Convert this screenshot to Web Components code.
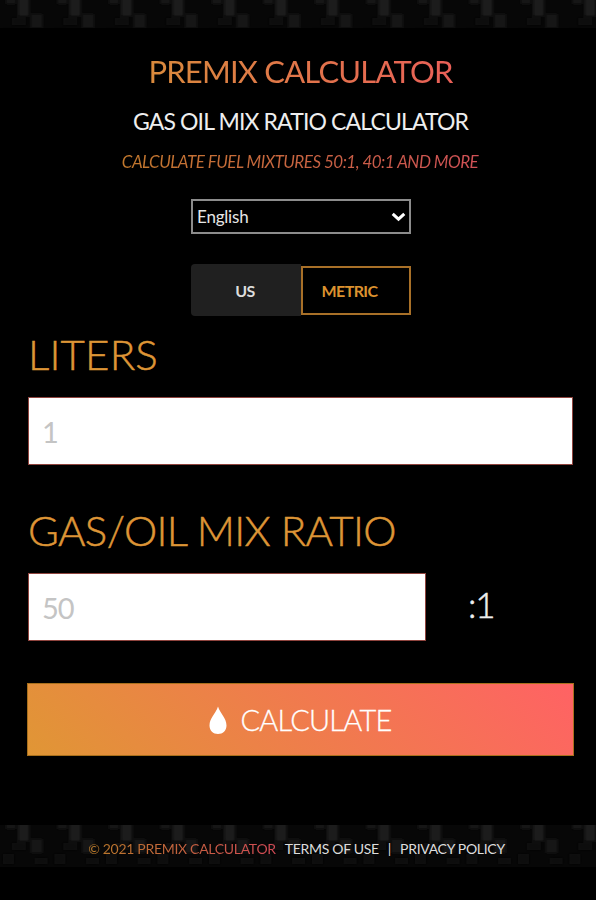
<!DOCTYPE html>
<html lang="en">
<head>
<meta charset="utf-8">
<title>Premix Calculator</title>
<style>
  * { box-sizing: border-box; }
  body {
    margin: 0;
    height: 900px;
    overflow: hidden;
    background: #000;
    color: #fff;
    font-family: Lato, "Liberation Sans", sans-serif;
    --orange: #dd9536;
    --brand: linear-gradient(45deg, #e09635, #ff6264);
  }
</style>
</head>
<body>
<premix-app></premix-app>

<script>
class CarbonStrip extends HTMLElement {
  constructor() {
    super();
    this.attachShadow({ mode: "open" });
    this.shadowRoot.innerHTML = `
      <style>
        :host { display: block; background: #060606; }
        svg { display: block; width: 100%; height: 100%; }
        .wrap { display: grid; height: 100%; }
        .wrap > * { grid-area: 1 / 1; min-height: 0; }
        .content { display: flex; justify-content: center; align-items: center; }
      </style>
      <div class="wrap">
        <svg aria-hidden="true">
          <defs>
            <filter id="soft"><feGaussianBlur stdDeviation="1.8"/></filter>
            <pattern id="weave" width="51.5" height="42" patternUnits="userSpaceOnUse">
              <rect width="51.5" height="42" fill="#070707"/>
              <g filter="url(#soft)">
                <rect x="18" y="-3" width="11" height="19" fill="#1a1a1a"/>
                <rect x="31" y="14" width="11" height="14" fill="#191919"/>
                <rect x="6" y="-3" width="10" height="7" fill="#181818"/>
                <rect x="12" y="18" width="14" height="7" fill="#090909"/>
                <rect x="3" y="29" width="11" height="10" fill="#0e0e0e"/>
                <rect x="35" y="33" width="12" height="6" fill="#101010"/>
              </g>
            </pattern>
          </defs>
          <rect width="100%" height="100%" fill="url(#weave)"/>
        </svg>
        <div class="content"><slot></slot></div>
      </div>`;
  }
}
customElements.define("carbon-strip", CarbonStrip);

class PageTitle extends HTMLElement {
  constructor() {
    super();
    this.attachShadow({ mode: "open" });
    this.shadowRoot.innerHTML = `
      <style>
        :host { display: flex; flex-direction: column; align-items: center; text-transform: uppercase; white-space: nowrap; }
        h1, h2, p { margin: 0; font-weight: 400; }
        h1, p { -webkit-background-clip: text; background-clip: text; color: transparent; }
        h1 { font-size: 31px; line-height: 40px; letter-spacing: -0.8px; background-image: linear-gradient(90deg, #d98a3c, #ea6058); }
        h2 { margin-top: 13px; font-size: 23px; line-height: 34px; letter-spacing: -0.87px; color: #eee; }
        p { margin-top: 13px; padding-right: 1px; font-size: 17px; line-height: 22px; font-style: italic; letter-spacing: -0.52px; background-image: linear-gradient(90deg, #c2782c, #cf5056); }
      </style>
      <h1><slot name="title"></slot></h1>
      <h2><slot name="subtitle"></slot></h2>
      <p><slot name="tagline"></slot></p>`;
  }
}
customElements.define("page-title", PageTitle);

class LanguageSelect extends HTMLElement {
  constructor() {
    super();
    this.attachShadow({ mode: "open" });
    this.shadowRoot.innerHTML = `
      <style>
        :host {
          display: flex; align-items: center; justify-content: space-between; box-sizing: border-box;
          width: 220px; height: 35px; padding: 0 3px 0 4px; border: 2px solid #8c8c8c;
          font-size: 17px; letter-spacing: -0.2px; color: #e6e6e6;
        }
        svg { width: 15px; height: 10px; }
      </style>
      <span><slot></slot></span>
      <svg viewBox="0 0 15 10"><path d="M1.7 1.8 L7.5 7.2 L13.3 1.8" fill="none" stroke="#fff" stroke-width="3"/></svg>`;
  }
}
customElements.define("language-select", LanguageSelect);

class UnitToggle extends HTMLElement {
  constructor() {
    super();
    this.attachShadow({ mode: "open" });
    this.shadowRoot.innerHTML = `
      <style>
        :host { display: flex; align-items: center; width: 220px; height: 52px; font-size: 16px; font-weight: 700; }
        button {
          box-sizing: border-box; border: 0; margin: 0; padding: 0 2px 0 0; font: inherit; letter-spacing: -0.6px;
          width: 110px; height: 52px; background: #202020; color: #ddd; border-radius: 4px 0 0 4px;
        }
        .on { height: 49px; margin-top: 1px; padding-right: 13px; background: #000; color: #dc922f; border: 2px solid #a87028; border-radius: 0; }
      </style>
      <button>US</button><button class="on">METRIC</button>`;
  }
}
customElements.define("unit-toggle", UnitToggle);

class NumberField extends HTMLElement {
  connectedCallback() {
    this.attachShadow({ mode: "open" });
    this.shadowRoot.innerHTML = `
      <style>
        :host { display: block; }
        label, .suffix { font-weight: 300; -webkit-text-stroke: 0.5px currentColor; }
        label { display: block; font-size: 42px; line-height: 50px; letter-spacing: var(--label-spacing, 0.2px); color: var(--orange); white-space: nowrap; }
        .row { display: flex; align-items: center; margin-top: 18px; }
        .box {
          box-sizing: border-box; flex: 0 0 var(--box-width, 545px); height: 68px; padding: 1px 0 0 13px;
          display: flex; align-items: center;
          background: #fff; border: 1px solid #8f443e; color: #c4c4c4; font-size: 29px; letter-spacing: -1px;
        }
        .suffix { margin-left: 42px; font-size: 35px; line-height: 42px; letter-spacing: -1.2px; color: #eee; padding-bottom: 6px; }
      </style>
      <label>${this.getAttribute("label")}</label>
      <div class="row">
        <div class="box">${this.getAttribute("placeholder")}</div>
        <span class="suffix"><slot></slot></span>
      </div>`;
  }
}
customElements.define("number-field", NumberField);

class CalcButton extends HTMLElement {
  constructor() {
    super();
    this.attachShadow({ mode: "open" });
    this.shadowRoot.innerHTML = `
      <style>
        :host { display: block; }
        button {
          display: flex; align-items: center; justify-content: center; gap: 13px;
          width: 547px; height: 73px; padding: 0; margin: 0;
          border: 1px solid #a8701c; background: var(--brand); color: #fff;
          font: 300 29px Lato, sans-serif; letter-spacing: -0.75px;
          -webkit-text-stroke: 0.3px currentColor;
        }
        svg { width: 18px; height: 29px; margin-top: 2px; }
      </style>
      <button>
        <svg viewBox="0 0 18 29"><path d="M9 0.5 C11 7 17.5 12 17.5 19.5 C17.5 24.5 13.8 28 9 28 S0.5 24.5 0.5 19.5 C0.5 12 7 7 9 0.5 Z" fill="#fff"/></svg>
        <slot></slot>
      </button>`;
  }
}
customElements.define("calc-button", CalcButton);

class PageFooter extends HTMLElement {
  constructor() {
    super();
    this.attachShadow({ mode: "open" });
    this.shadowRoot.innerHTML = `
      <style>
        :host { display: block; }
        carbon-strip { height: 42px; }
        .line { display: flex; font-size: 14px; line-height: 20px; letter-spacing: -0.3px; white-space: nowrap; padding: 6px 3px 0 0; color: #ddd; }
        .copy { background: linear-gradient(90deg, #b87a28, #d24a56); -webkit-background-clip: text; background-clip: text; color: transparent; }
        .terms { margin-left: 9px; }
        .bar { margin: 0 9px; }
      </style>
      <carbon-strip>
        <div class="line">
          <span class="copy">© 2021 PREMIX CALCULATOR</span>
          <span class="terms">TERMS OF USE</span>
          <span class="bar">|</span>
          <span>PRIVACY POLICY</span>
        </div>
      </carbon-strip>`;
  }
}
customElements.define("page-footer", PageFooter);

class PremixApp extends HTMLElement {
  constructor() {
    super();
    this.attachShadow({ mode: "open" });
    this.shadowRoot.innerHTML = `
      <style>
        :host { display: flex; flex-direction: column; width: 596px; height: 900px; }
        .top { height: 28px; flex: none; }
        main { display: flex; flex-direction: column; height: 797px; padding: 0 0 0 27px; box-sizing: border-box; }
        page-title { margin-top: 23px; width: 547px; }
        language-select { margin: 26px 0 0 164px; }
        unit-toggle { margin: 30px 0 0 164px; }
        number-field { margin: 13px 0 0 1px; }
        .ratio { margin-top: 40px; --box-width: 398px; --label-spacing: -0.7px; }
        calc-button { margin-top: 42px; }
      </style>
      <carbon-strip class="top"></carbon-strip>
      <main>
        <page-title>
          <span slot="title">Premix Calculator</span>
          <span slot="subtitle">Gas Oil Mix Ratio Calculator</span>
          <span slot="tagline">Calculate fuel mixtures 50:1, 40:1 and more</span>
        </page-title>
        <language-select>English</language-select>
        <unit-toggle></unit-toggle>
        <number-field label="LITERS" placeholder="1"></number-field>
        <number-field class="ratio" label="GAS/OIL MIX RATIO" placeholder="50">:1</number-field>
        <calc-button>CALCULATE</calc-button>
      </main>
      <page-footer></page-footer>`;
  }
}
customElements.define("premix-app", PremixApp);
</script>
</body>
</html>
